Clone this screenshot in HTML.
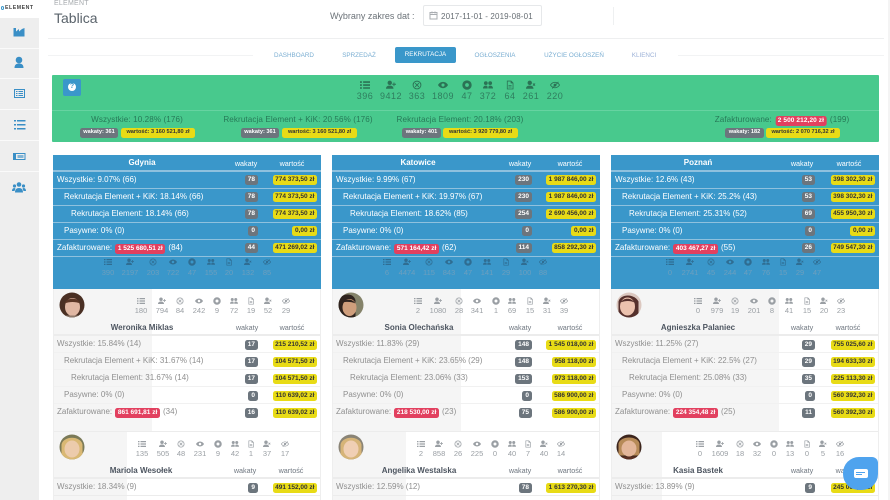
<!DOCTYPE html>
<html lang="pl"><head><meta charset="utf-8"><title>Tablica</title>
<style>
*{box-sizing:border-box}
html,body{margin:0;padding:0;width:890px;height:500px;overflow:hidden;background:#fff;font-family:"Liberation Sans",sans-serif}
.a{position:absolute;white-space:nowrap}
.side{left:0;top:18px;width:39px;height:482px;background:#eeeeee}
.side i{position:absolute;left:0;width:39px;height:1px;background:#fafafa}
.tab{top:51.5px;font-size:6.3px;color:#7aaed2;transform:translateX(-50%)}
.g,.y,.d{position:absolute;font-weight:bold;font-size:6.5px;line-height:9px;height:9.5px;border-radius:2.5px;padding:0 2.5px;white-space:nowrap;text-align:center}
.g{background:#6c757d;color:#fff;padding:0 3px}
.y{background:#e8db16;color:#333}
.s{font-size:5.6px;padding:0}
.d{position:static;display:inline-block;background:#e2405f;color:#fff;vertical-align:0;margin:0 1px}
.sum{top:115px;font-size:8.1px;color:#277a58;transform:translateX(-50%);letter-spacing:.1px}
.card{position:absolute;top:155px;width:268px;height:345px;overflow:hidden;background:#fff}
.card:after{content:"";position:absolute;left:0;right:0;top:134px;bottom:0;border-left:1px solid #eee;border-right:1px solid #eee}
.blue{position:absolute;left:0;top:0;width:100%;height:134px;background:#3a97ca}
.gr{position:absolute;left:0;background:#f5f5f5}
.r{position:absolute;left:0;width:100%;height:17px;line-height:16.5px;font-size:8px;border-top:1px solid #f1f1f1;color:#8f8f8f}
.blue .r{border-top:1px solid #8fc1de;color:#fff;line-height:15px}
.l0{position:absolute;left:4px;white-space:nowrap}
.l1{position:absolute;left:11px;white-space:nowrap}
.l2{position:absolute;left:18px;white-space:nowrap}
.r .g{top:4px}.r .y{top:4px;right:4px}
.blue .r .g,.blue .r .y{top:3px}
.h{position:absolute;left:0;width:178px;text-align:center;font-size:8px;font-weight:bold;color:#4d5560;white-space:nowrap}
.blue .h{color:#fff}
.c1,.c2{position:absolute;font-size:7.2px;color:#6f7780;transform:translateX(-50%);margin-left:1px}
.blue .c1,.blue .c2{color:#fff}
.line{position:absolute;left:0;width:100%;height:2px;background:#ececec}
svg.ov{position:absolute;left:0;top:0;pointer-events:none}
svg text{font-family:"Liberation Sans",sans-serif;text-anchor:middle}
.bl text{fill:#6d9fbe}
.gn text{fill:#2f7d5e}
</style></head><body>

<svg width="0" height="0" style="position:absolute">
<symbol id="i1" viewBox="0 0 16 16"><path d="M0 2h3v2.500H0zM5 2h11v2.500H5zM0 6.800h3v2.500H0zM5 6.800h11v2.500H5zM0 11.500h3V14H0zM5 11.500h11V14H5z"/></symbol>
<symbol id="i2" viewBox="0 0 16 16"><circle cx="6" cy="4.500" r="3.500"/><path d="M0 14c0-3.500 2.500-5 6-5s6 1.500 6 5zM12 4h1.500v2H16v1.500h-2.500V10H12V7.500h-2V6h2z"/></symbol>
<symbol id="i3" viewBox="0 0 16 16"><path fill-rule="evenodd" d="M8 1a7 7 0 1 0 0 14A7 7 0 0 0 8 1zm0 1.500a5.500 5.500 0 1 1 0 11 5.500 5.500 0 0 1 0-11z"/><path d="M5.500 4.500L8 7l2.500-2.500 1 1L9 8l2.500 2.500-1 1L8 9l-2.500 2.500-1-1L7 8 4.500 5.500z"/></symbol>
<symbol id="i4" viewBox="0 0 16 16"><path fill-rule="evenodd" d="M8 3c3.500 0 6.500 2.200 8 5-1.500 2.800-4.500 5-8 5s-6.500-2.200-8-5c1.500-2.800 4.500-5 8-5zm0 2.500a2.500 2.500 0 1 0 0 5 2.500 2.500 0 0 0 0-5z"/></symbol>
<symbol id="i5" viewBox="0 0 16 16"><path fill-rule="evenodd" d="M8 .5a7.500 7.500 0 1 0 0 15 7.500 7.500 0 0 0 0-15zM8 5a3 3 0 1 1 0 6 3 3 0 0 1 0-6z"/></symbol>
<symbol id="i6" viewBox="0 0 16 16"><circle cx="4.500" cy="5" r="3"/><circle cx="11.500" cy="5" r="3"/><path d="M0 13.500c0-3 2-4.500 4.500-4.500S7.500 10 7.500 13.500zM8.500 13.500C8.500 10 9 9 11.500 9s4.500 1.500 4.500 4.500z"/></symbol>
<symbol id="i7" viewBox="0 0 16 16"><path fill-rule="evenodd" d="M3 1h7l3.500 3.500V15H3zm1.300 1.300v11.400h7.900V5.300H9V2.300z"/><path d="M5.500 8h5v1.200h-5zM5.500 10.500h5v1.200h-5z"/></symbol>
<symbol id="i8" viewBox="0 0 16 16"><circle cx="6" cy="4.500" r="3.500"/><path d="M0 14c0-3.500 2.500-5 6-5s6 1.500 6 5zM11.500 5l1.300 1.300L14 5l1 1-1.200 1.300L15 8.500l-1 1-1.200-1.200-1.300 1.200-1-1 1.300-1.200L10.500 6z"/></symbol>
<symbol id="i9" viewBox="0 0 16 16"><path fill-rule="evenodd" d="M8 3c3.500 0 6.500 2.200 8 5-1.500 2.800-4.500 5-8 5s-6.500-2.200-8-5c1.500-2.800 4.500-5 8-5zm0 1.300C5.300 4.300 3 5.800 1.600 8 3 10.200 5.300 11.700 8 11.700s5-1.500 6.400-3.700C13 5.800 10.700 4.300 8 4.300z"/><circle cx="8" cy="8" r="2.300"/><path d="M3 13L13 2.500l1 .8L4 14z"/></symbol>
</svg>

<!-- sidebar -->
<div class="a" style="left:1px;top:6px;width:3px;height:3.500px;border:1px solid #3a97ca;border-radius:50%"></div>
<div class="a" style="left:5px;top:4.500px;font-size:5.200px;font-weight:bold;letter-spacing:.55px;color:#444">ELEMENT</div>
<div class="a side"><i style="top:30px"></i><i style="top:60px"></i><i style="top:91px"></i><i style="top:122px"></i><i style="top:153px"></i></div>
<svg class="a" style="left:0;top:0" width="39" height="210" fill="#3a8fc6">
<path d="M13.500 28h2.500v3.500l3-2.500v2.500l3-2.500 2.500-1v8.500h-11z"/>
<circle cx="19" cy="60" r="3.300"/><path d="M14.500 68c0-3.500 2-4.500 4.500-4.500s4.500 1 4.500 4.500z"/>
<path fill-rule="evenodd" d="M14 89h11v9H14zm1 1v7h9v-7z"/><path d="M16 91h1.500v1H16zM18.500 91H23v1h-4.500zM16 93h1.500v1H16zM18.500 93H23v1h-4.500zM16 95h1.500v1H16zM18.500 95H23v1h-4.500z"/>
<path d="M14 120h2v1.500h-2zM17 120h8.500v1.500H17zM14 124h2v1.500h-2zM17 124h8.500v1.500H17zM14 128h2v1.500h-2zM17 128h8.500v1.500H17z"/>
<path fill-rule="evenodd" d="M13 153h12.500v7H13zm3 1v5h8.500v-5z"/><path d="M17.500 155h6v3h-6z" opacity=".6"/>
<circle cx="19" cy="184.500" r="2.300"/><circle cx="14.500" cy="186" r="1.600"/><circle cx="23.500" cy="186" r="1.600"/><path d="M15 192.500c0-3 1.500-4.500 4-4.500s4 1.500 4 4.500zM12 191c0-2 1-3 2.500-3l1 .5-1 2.500zM26 191c0-2-1-3-2.500-3l-1 .5 1 2.500z"/>
</svg>

<!-- header -->
<div class="a" style="left:54px;top:0;font-size:7px;letter-spacing:.25px;color:#a5a9ad">ELEMENT</div>
<div class="a" style="left:54px;top:10px;font-size:14px;color:#5a636b">Tablica</div>
<div class="a" style="left:330px;top:11px;font-size:9px;color:#6b7278">Wybrany zakres dat :</div>
<div class="a" style="left:423px;top:5px;width:119px;height:21px;border:1px solid #e6e8ea;border-radius:2px"></div>
<svg class="a" style="left:429px;top:11px" width="9" height="9" fill="none" stroke="#a9adb1" stroke-width="1"><rect x="1" y="1.500" width="7" height="6.500"/><path d="M1 3.500h7M3 .5v2M6 .5v2"/></svg>
<div class="a" style="left:441px;top:11.500px;font-size:8px;letter-spacing:.15px;color:#666d73">2017-11-01 - 2019-08-01</div>
<div class="a" style="left:613px;top:7px;width:1px;height:18px;background:#eef0f1"></div>
<div class="a" style="left:48px;top:38px;width:836px;height:1px;background:#eeeff0"></div>
<div class="a" style="left:48px;top:55px;width:205px;height:1px;background:#f2f3f4"></div>
<div class="a" style="left:678px;top:55px;width:206px;height:1px;background:#f2f3f4"></div>
<div class="a tab" style="left:294px">DASHBOARD</div>
<div class="a tab" style="left:359px">SPRZEDAŻ</div>
<div class="a" style="left:395px;top:47px;width:61px;height:15.500px;background:#3a97ca;border-radius:2px;color:#fff;font-size:6.300px;line-height:15.500px;text-align:center">REKRUTACJA</div>
<div class="a tab" style="left:495px">OGŁOSZENIA</div>
<div class="a tab" style="left:574px">UŻYCIE OGŁOSZEŃ</div>
<div class="a tab" style="left:644px;color:#9db2d8">KLIENCI</div>
<div class="a" style="left:888px;top:0;width:2px;height:500px;background:#f4f4f4"></div>

<!-- green -->
<div class="a" style="left:52px;top:75px;width:827px;height:67px;background:#48c98d;border-radius:1px"></div>
<div class="a" style="left:52px;top:110px;width:827px;height:1px;background:#66d3a1"></div>
<div class="a" style="left:63px;top:79px;width:18px;height:17px;background:#3a97ca;border-radius:2px;"></div>
<div class="a" style="left:68px;top:83px;width:8px;height:8px;background:#fff;border-radius:50%;color:#3a97ca;font-size:7px;font-weight:bold;line-height:8px;text-align:center">?</div>
<div class="a sum" style="left:137px">Wszystkie: 10.28% (176)</div>
<div class="a sum" style="left:298px">Rekrutacja Element + KiK: 20.56% (176)</div>
<div class="a sum" style="left:460px">Rekrutacja Element: 20.18% (203)</div>
<div class="a sum" style="left:782px">Zafakturowane: <b class="d">2 500 212,20 zł</b> (199)</div>
<b class="g s" style="left:80px;top:128px;width:38px">wakaty: 361</b><b class="y s" style="left:121px;top:128px;width:74px">wartość: 3 160 521,80 zł</b>
<b class="g s" style="left:241px;top:128px;width:38px">wakaty: 361</b><b class="y s" style="left:282px;top:128px;width:75px">wartość: 3 160 521,80 zł</b>
<b class="g s" style="left:402px;top:128px;width:39px">wakaty: 401</b><b class="y s" style="left:443px;top:128px;width:75px">wartość: 3 920 779,80 zł</b>
<b class="g s" style="left:725px;top:128px;width:39px">wakaty: 182</b><b class="y s" style="left:766px;top:128px;width:74px">wartość: 2 070 716,32 zł</b>

<!-- Gdynia -->
<div class="card" style="left:53px">
<div class="blue">
<div class="h" style="top:3px">Gdynia</div><div class="c1" style="left:192px;top:3.500px">wakaty</div><div class="c2" style="left:238px;top:3.500px">wartość</div>
<div class="r" style="top:15px;border-top-width:2px"><span class="l0">Wszystkie: 9.07% (66)</span><b class="g" style="right:63px">78</b><b class="y">774 373,50 zł</b></div>
<div class="r" style="top:33px"><span class="l1">Rekrutacja Element + KiK: 18.14% (66)</span><b class="g" style="right:63px">78</b><b class="y">774 373,50 zł</b></div>
<div class="r" style="top:50px"><span class="l2">Rekrutacja Element: 18.14% (66)</span><b class="g" style="right:63px">78</b><b class="y">774 373,50 zł</b></div>
<div class="r" style="top:67px"><span class="l1">Pasywne: 0% (0)</span><b class="g" style="right:63px">0</b><b class="y">0,00 zł</b></div>
<div class="r" style="top:84px"><span class="l0">Zafakturowane: <b class="d">1 525 680,51 zł</b> (84)</span><b class="g" style="right:63px">44</b><b class="y">471 269,02 zł</b></div>
<div class="r" style="top:101px;height:0"></div>
</div>
<div class="gr" style="top:134px;width:99px;height:142px"></div>
<div class="gr" style="top:276px;width:74px;height:69px"></div>
<div class="h" style="top:168px">Weronika Miklas</div><div class="c1" style="left:193px;top:168px">wakaty</div><div class="c2" style="left:238px;top:168px">wartość</div>
<div class="line" style="top:179px"></div>
<div class="r" style="top:181px;border:0"><span class="l0">Wszystkie: 15.84% (14)</span><b class="g" style="right:63px">17</b><b class="y">215 210,52 zł</b></div>
<div class="r" style="top:197px"><span class="l1">Rekrutacja Element + KiK: 31.67% (14)</span><b class="g" style="right:63px">17</b><b class="y">104 571,50 zł</b></div>
<div class="r" style="top:214px"><span class="l2">Rekrutacja Element: 31.67% (14)</span><b class="g" style="right:63px">17</b><b class="y">104 571,50 zł</b></div>
<div class="r" style="top:231px"><span class="l1">Pasywne: 0% (0)</span><b class="g" style="right:63px">0</b><b class="y">110 639,02 zł</b></div>
<div class="r" style="top:248px"><span class="l0">Zafakturowane: <b class="d">861 691,81 zł</b> (34)</span><b class="g" style="right:63px">16</b><b class="y">110 639,02 zł</b></div>
<div class="line" style="top:276px;height:1px"></div>
<div class="h" style="top:311px;width:176px">Mariola Wesołek</div><div class="c1" style="left:191px;top:311px">wakaty</div><div class="c2" style="left:237px;top:311px">wartość</div>
<div class="line" style="top:322px"></div>
<div class="r" style="top:324px;border:0"><span class="l0">Wszystkie: 18.34% (9)</span><b class="g" style="right:63px">9</b><b class="y">491 152,00 zł</b></div>
<div class="line" style="top:340px;height:1px"></div>
</div>

<!-- Katowice -->
<div class="card" style="left:332px">
<div class="blue">
<div class="h" style="top:3px;width:172px">Katowice</div><div class="c1" style="left:187px;top:3.500px">wakaty</div><div class="c2" style="left:237px;top:3.500px">wartość</div>
<div class="r" style="top:15px;border-top-width:2px"><span class="l0">Wszystkie: 9.99% (67)</span><b class="g" style="right:68px">230</b><b class="y">1 987 846,00 zł</b></div>
<div class="r" style="top:33px"><span class="l1">Rekrutacja Element + KiK: 19.97% (67)</span><b class="g" style="right:68px">230</b><b class="y">1 987 846,00 zł</b></div>
<div class="r" style="top:50px"><span class="l2">Rekrutacja Element: 18.62% (85)</span><b class="g" style="right:68px">254</b><b class="y">2 690 456,00 zł</b></div>
<div class="r" style="top:67px"><span class="l1">Pasywne: 0% (0)</span><b class="g" style="right:68px">0</b><b class="y">0,00 zł</b></div>
<div class="r" style="top:84px"><span class="l0">Zafakturowane: <b class="d">571 164,42 zł</b> (62)</span><b class="g" style="right:68px">114</b><b class="y">858 292,30 zł</b></div>
<div class="r" style="top:101px;height:0"></div>
</div>
<div class="gr" style="top:134px;width:129px;height:142px"></div>
<div class="gr" style="top:276px;width:74px;height:69px"></div>
<div class="h" style="top:168px;width:174px">Sonia Olechańska</div><div class="c1" style="left:187px;top:168px">wakaty</div><div class="c2" style="left:237px;top:168px">wartość</div>
<div class="line" style="top:179px"></div>
<div class="r" style="top:181px;border:0"><span class="l0">Wszystkie: 11.83% (29)</span><b class="g" style="right:68px">148</b><b class="y">1 545 018,00 zł</b></div>
<div class="r" style="top:197px"><span class="l1">Rekrutacja Element + KiK: 23.65% (29)</span><b class="g" style="right:68px">148</b><b class="y">958 118,00 zł</b></div>
<div class="r" style="top:214px"><span class="l2">Rekrutacja Element: 23.06% (33)</span><b class="g" style="right:68px">153</b><b class="y">973 118,00 zł</b></div>
<div class="r" style="top:231px"><span class="l1">Pasywne: 0% (0)</span><b class="g" style="right:68px">0</b><b class="y">586 900,00 zł</b></div>
<div class="r" style="top:248px"><span class="l0">Zafakturowane: <b class="d">218 530,00 zł</b> (23)</span><b class="g" style="right:68px">75</b><b class="y">586 900,00 zł</b></div>
<div class="line" style="top:276px;height:1px"></div>
<div class="h" style="top:311px;width:174px">Angelika Westalska</div><div class="c1" style="left:187px;top:311px">wakaty</div><div class="c2" style="left:237px;top:311px">wartość</div>
<div class="line" style="top:322px"></div>
<div class="r" style="top:324px;border:0"><span class="l0">Wszystkie: 12.59% (12)</span><b class="g" style="right:68px">78</b><b class="y">1 613 270,30 zł</b></div>
<div class="line" style="top:340px;height:1px"></div>
</div>

<!-- Poznan -->
<div class="card" style="left:611px">
<div class="blue">
<div class="h" style="top:3px;width:174px">Poznań</div><div class="c1" style="left:190px;top:3.500px">wakaty</div><div class="c2" style="left:237px;top:3.500px">wartość</div>
<div class="r" style="top:15px;border-top-width:2px"><span class="l0">Wszystkie: 12.6% (43)</span><b class="g" style="right:64px">53</b><b class="y">398 302,30 zł</b></div>
<div class="r" style="top:33px"><span class="l1">Rekrutacja Element + KiK: 25.2% (43)</span><b class="g" style="right:64px">53</b><b class="y">398 302,30 zł</b></div>
<div class="r" style="top:50px"><span class="l2">Rekrutacja Element: 25.31% (52)</span><b class="g" style="right:64px">69</b><b class="y">455 950,30 zł</b></div>
<div class="r" style="top:67px"><span class="l1">Pasywne: 0% (0)</span><b class="g" style="right:64px">0</b><b class="y">0,00 zł</b></div>
<div class="r" style="top:84px"><span class="l0">Zafakturowane: <b class="d">403 467,27 zł</b> (55)</span><b class="g" style="right:64px">26</b><b class="y">749 547,30 zł</b></div>
<div class="r" style="top:101px;height:0"></div>
</div>
<div class="gr" style="top:134px;width:168px;height:142px"></div>
<div class="gr" style="top:276px;width:51px;height:69px"></div>
<div class="h" style="top:168px;width:174px">Agnieszka Palaniec</div><div class="c1" style="left:190px;top:168px">wakaty</div><div class="c2" style="left:236px;top:168px">wartość</div>
<div class="line" style="top:179px"></div>
<div class="r" style="top:181px;border:0"><span class="l0">Wszystkie: 11.25% (27)</span><b class="g" style="right:64px">29</b><b class="y">755 025,60 zł</b></div>
<div class="r" style="top:197px"><span class="l1">Rekrutacja Element + KiK: 22.5% (27)</span><b class="g" style="right:64px">29</b><b class="y">194 633,30 zł</b></div>
<div class="r" style="top:214px"><span class="l2">Rekrutacja Element: 25.08% (33)</span><b class="g" style="right:64px">35</b><b class="y">225 113,30 zł</b></div>
<div class="r" style="top:231px"><span class="l1">Pasywne: 0% (0)</span><b class="g" style="right:64px">0</b><b class="y">560 392,30 zł</b></div>
<div class="r" style="top:248px"><span class="l0">Zafakturowane: <b class="d">224 354,48 zł</b> (25)</span><b class="g" style="right:64px">11</b><b class="y">560 392,30 zł</b></div>
<div class="line" style="top:276px;height:1px"></div>
<div class="h" style="top:311px;width:174px">Kasia Bastek</div><div class="c1" style="left:190px;top:311px">wakaty</div><div class="c2" style="left:236px;top:311px">wartość</div>
<div class="line" style="top:322px"></div>
<div class="r" style="top:324px;border:0"><span class="l0">Wszystkie: 13.89% (9)</span><b class="g" style="right:64px">9</b><b class="y">245 060,30 zł</b></div>
<div class="line" style="top:340px;height:1px"></div>
</div>

<!-- stats overlay -->
<svg class="ov" width="890" height="500" font-size="8">
<g class="gn" fill="#2b7355" font-size="9" letter-spacing=".5">
<use href="#i1" x="360" y="80" width="10" height="10"/><text x="365" y="99">396</text>
<use href="#i2" x="386" y="80" width="10" height="10"/><text x="391" y="99">9412</text>
<use href="#i3" x="412" y="80" width="10" height="10"/><text x="417" y="99">363</text>
<use href="#i4" x="438" y="80" width="10" height="10"/><text x="443" y="99">1809</text>
<use href="#i5" x="462" y="80" width="10" height="10"/><text x="467" y="99">47</text>
<use href="#i6" x="483" y="80" width="10" height="10"/><text x="488" y="99">372</text>
<use href="#i7" x="505" y="80" width="10" height="10"/><text x="510" y="99">64</text>
<use href="#i8" x="526" y="80" width="10" height="10"/><text x="531" y="99">261</text>
<use href="#i9" x="550" y="80" width="10" height="10"/><text x="555" y="99">220</text>
</g>
<g class="bl" fill="#2f6d92" font-size="7.500">
<use href="#i1" x="104" y="258" width="8" height="8"/><text x="108" y="275">390</text>
<use href="#i2" x="126" y="258" width="8" height="8"/><text x="130" y="275">2197</text>
<use href="#i3" x="149" y="258" width="8" height="8"/><text x="153" y="275">203</text>
<use href="#i4" x="169" y="258" width="8" height="8"/><text x="173" y="275">722</text>
<use href="#i5" x="188" y="258" width="8" height="8"/><text x="192" y="275">47</text>
<use href="#i6" x="207" y="258" width="8" height="8"/><text x="211" y="275">155</text>
<use href="#i7" x="225" y="258" width="8" height="8"/><text x="229" y="275">20</text>
<use href="#i8" x="244" y="258" width="8" height="8"/><text x="248" y="275">132</text>
<use href="#i9" x="263" y="258" width="8" height="8"/><text x="267" y="275">85</text>
<use href="#i1" x="383" y="258" width="8" height="8"/><text x="387" y="275">6</text>
<use href="#i2" x="403" y="258" width="8" height="8"/><text x="407" y="275">4474</text>
<use href="#i3" x="425" y="258" width="8" height="8"/><text x="429" y="275">115</text>
<use href="#i4" x="445" y="258" width="8" height="8"/><text x="449" y="275">843</text>
<use href="#i5" x="464" y="258" width="8" height="8"/><text x="468" y="275">47</text>
<use href="#i6" x="483" y="258" width="8" height="8"/><text x="487" y="275">141</text>
<use href="#i7" x="502" y="258" width="8" height="8"/><text x="506" y="275">29</text>
<use href="#i8" x="521" y="258" width="8" height="8"/><text x="525" y="275">100</text>
<use href="#i9" x="539" y="258" width="8" height="8"/><text x="543" y="275">88</text>
<use href="#i1" x="666" y="258" width="8" height="8"/><text x="670" y="275">0</text>
<use href="#i2" x="686" y="258" width="8" height="8"/><text x="690" y="275">2741</text>
<use href="#i3" x="707" y="258" width="8" height="8"/><text x="711" y="275">45</text>
<use href="#i4" x="726" y="258" width="8" height="8"/><text x="730" y="275">244</text>
<use href="#i5" x="744" y="258" width="8" height="8"/><text x="748" y="275">47</text>
<use href="#i6" x="762" y="258" width="8" height="8"/><text x="766" y="275">76</text>
<use href="#i7" x="779" y="258" width="8" height="8"/><text x="783" y="275">15</text>
<use href="#i8" x="796" y="258" width="8" height="8"/><text x="800" y="275">29</text>
<use href="#i9" x="813" y="258" width="8" height="8"/><text x="817" y="275">47</text>
</g>
<g fill="#9a9fa4" font-size="7.500">
<use href="#i1" x="137" y="297" width="8" height="8"/><text x="141" y="313">180</text>
<use href="#i2" x="158" y="297" width="8" height="8"/><text x="162" y="313">794</text>
<use href="#i3" x="176" y="297" width="8" height="8"/><text x="180" y="313">84</text>
<use href="#i4" x="195" y="297" width="8" height="8"/><text x="199" y="313">242</text>
<use href="#i5" x="213" y="297" width="8" height="8"/><text x="217" y="313">9</text>
<use href="#i6" x="230" y="297" width="8" height="8"/><text x="234" y="313">72</text>
<use href="#i7" x="247" y="297" width="8" height="8"/><text x="251" y="313">19</text>
<use href="#i8" x="264" y="297" width="8" height="8"/><text x="268" y="313">52</text>
<use href="#i9" x="282" y="297" width="8" height="8"/><text x="286" y="313">29</text>
<use href="#i1" x="414" y="297" width="8" height="8"/><text x="418" y="313">2</text>
<use href="#i2" x="434" y="297" width="8" height="8"/><text x="438" y="313">1080</text>
<use href="#i3" x="455" y="297" width="8" height="8"/><text x="459" y="313">28</text>
<use href="#i4" x="473" y="297" width="8" height="8"/><text x="477" y="313">341</text>
<use href="#i5" x="492" y="297" width="8" height="8"/><text x="496" y="313">1</text>
<use href="#i6" x="508" y="297" width="8" height="8"/><text x="512" y="313">69</text>
<use href="#i7" x="526" y="297" width="8" height="8"/><text x="530" y="313">15</text>
<use href="#i8" x="543" y="297" width="8" height="8"/><text x="547" y="313">31</text>
<use href="#i9" x="560" y="297" width="8" height="8"/><text x="564" y="313">39</text>
<use href="#i1" x="694" y="297" width="8" height="8"/><text x="698" y="313">0</text>
<use href="#i2" x="713" y="297" width="8" height="8"/><text x="717" y="313">979</text>
<use href="#i3" x="731" y="297" width="8" height="8"/><text x="735" y="313">19</text>
<use href="#i4" x="750" y="297" width="8" height="8"/><text x="754" y="313">201</text>
<use href="#i5" x="768" y="297" width="8" height="8"/><text x="772" y="313">8</text>
<use href="#i6" x="785" y="297" width="8" height="8"/><text x="789" y="313">41</text>
<use href="#i7" x="803" y="297" width="8" height="8"/><text x="807" y="313">15</text>
<use href="#i8" x="820" y="297" width="8" height="8"/><text x="824" y="313">20</text>
<use href="#i9" x="837" y="297" width="8" height="8"/><text x="841" y="313">23</text>
<use href="#i1" x="138" y="440" width="8" height="8"/><text x="142" y="456">135</text>
<use href="#i2" x="159" y="440" width="8" height="8"/><text x="163" y="456">505</text>
<use href="#i3" x="177" y="440" width="8" height="8"/><text x="181" y="456">48</text>
<use href="#i4" x="196" y="440" width="8" height="8"/><text x="200" y="456">231</text>
<use href="#i5" x="214" y="440" width="8" height="8"/><text x="218" y="456">9</text>
<use href="#i6" x="231" y="440" width="8" height="8"/><text x="235" y="456">42</text>
<use href="#i7" x="247" y="440" width="8" height="8"/><text x="251" y="456">1</text>
<use href="#i8" x="263" y="440" width="8" height="8"/><text x="267" y="456">37</text>
<use href="#i9" x="281" y="440" width="8" height="8"/><text x="285" y="456">17</text>
<use href="#i1" x="417" y="440" width="8" height="8"/><text x="421" y="456">2</text>
<use href="#i2" x="435" y="440" width="8" height="8"/><text x="439" y="456">858</text>
<use href="#i3" x="454" y="440" width="8" height="8"/><text x="458" y="456">26</text>
<use href="#i4" x="473" y="440" width="8" height="8"/><text x="477" y="456">225</text>
<use href="#i5" x="491" y="440" width="8" height="8"/><text x="495" y="456">0</text>
<use href="#i6" x="508" y="440" width="8" height="8"/><text x="512" y="456">40</text>
<use href="#i7" x="524" y="440" width="8" height="8"/><text x="528" y="456">7</text>
<use href="#i8" x="540" y="440" width="8" height="8"/><text x="544" y="456">40</text>
<use href="#i9" x="557" y="440" width="8" height="8"/><text x="561" y="456">14</text>
<use href="#i1" x="696" y="440" width="8" height="8"/><text x="700" y="456">0</text>
<use href="#i2" x="716" y="440" width="8" height="8"/><text x="720" y="456">1609</text>
<use href="#i3" x="736" y="440" width="8" height="8"/><text x="740" y="456">18</text>
<use href="#i4" x="753" y="440" width="8" height="8"/><text x="757" y="456">32</text>
<use href="#i5" x="770" y="440" width="8" height="8"/><text x="774" y="456">0</text>
<use href="#i6" x="786" y="440" width="8" height="8"/><text x="790" y="456">13</text>
<use href="#i7" x="803" y="440" width="8" height="8"/><text x="807" y="456">0</text>
<use href="#i8" x="819" y="440" width="8" height="8"/><text x="823" y="456">5</text>
<use href="#i9" x="836" y="440" width="8" height="8"/><text x="840" y="456">16</text>
</g>
<!-- avatars -->
<defs>
<clipPath id="ca"><circle cx="12.500" cy="12.500" r="12.500"/></clipPath>
</defs>
<g transform="translate(59.500,292.500)" clip-path="url(#ca)"><rect width="25" height="25" fill="#4a3024"/><ellipse cx="13" cy="14.500" rx="7.500" ry="9" fill="#e0b7a3"/><path d="M5 11c2-6 13-7 16 0-5-2-11-2-16 0z" fill="#5a3626"/><rect y="23" width="25" height="2" fill="#8f7a6c"/></g>
<g transform="translate(338.500,292.500)" clip-path="url(#ca)"><rect width="25" height="25" fill="#85836a"/><path d="M0 25V8c2-7 15-9 17 0v17z" fill="#2f231e"/><ellipse cx="11" cy="15" rx="7" ry="8.500" fill="#cf9e7c"/><path d="M4 10c3-4 10-4 13 1-4-2-9-2-13-1z" fill="#2f231e"/></g>
<g transform="translate(616.500,292.500)" clip-path="url(#ca)"><rect width="25" height="25" fill="#dcc8c0"/><path d="M2 25V9c2-8 16-8 20 0v16z" fill="#55302c"/><ellipse cx="11" cy="14" rx="7.500" ry="9" fill="#ecc2ae"/><path d="M4 10c3-5 11-5 14 0-4-2-9-2-14 0z" fill="#55302c"/></g>
<g transform="translate(59.500,434.500)" clip-path="url(#ca)"><rect width="25" height="25" fill="#7b7a58"/><path d="M2 25V10c2-9 19-9 21 0v15z" fill="#d9b874"/><ellipse cx="12.500" cy="14.500" rx="7.500" ry="8.500" fill="#eccbac"/></g>
<g transform="translate(338.500,434.500)" clip-path="url(#ca)"><rect width="25" height="25" fill="#8a8476"/><path d="M2 25V10c2-9 19-9 21 0v15z" fill="#d6b478"/><ellipse cx="12.500" cy="14.500" rx="7.500" ry="8.500" fill="#f0cfb4"/></g>
<g transform="translate(616.500,434.500)" clip-path="url(#ca)"><rect width="25" height="25" fill="#3b241c"/><path d="M2 21V9c2-8 19-8 21 0v12z" fill="#b68a58"/><ellipse cx="12.500" cy="14" rx="7.500" ry="8" fill="#e3b69a"/><rect y="22" width="25" height="3" fill="#5a2f22"/></g>
</svg>

<!-- chat button -->
<div class="a" style="left:843px;top:457px;width:35px;height:33px;background:#4fa3ee;border-radius:16px 6px 16px 16px"></div>
<div class="a" style="left:854px;top:469px;width:14px;height:9px;background:#fff;border-radius:2px"></div>
<div class="a" style="left:856px;top:471.500px;width:9px;height:1px;background:#4fa3ee"></div>
<div class="a" style="left:856px;top:474px;width:6px;height:1px;background:#4fa3ee"></div>
</body></html>
